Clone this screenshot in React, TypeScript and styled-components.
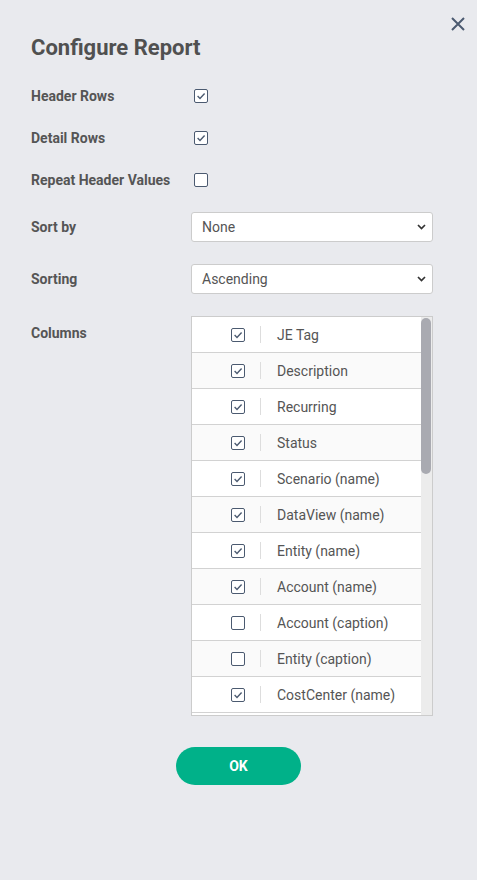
import React from "react";
import styled, { createGlobalStyle } from "styled-components";

const GlobalStyle = createGlobalStyle`
	html, body {
		margin: 0;
		padding: 0;
		background: #e9eaee;
		font-family: Roboto, "Liberation Sans", sans-serif;
		color: #555;
	}
`;

// only the rows that fit in the list are drawn; the thumb shows the rest
const columns: { name: string; checked: boolean }[] = [
	{ name: "JE Tag", checked: true },
	{ name: "Description", checked: true },
	{ name: "Recurring", checked: true },
	{ name: "Status", checked: true },
	{ name: "Scenario (name)", checked: true },
	{ name: "DataView (name)", checked: true },
	{ name: "Entity (name)", checked: true },
	{ name: "Account (name)", checked: true },
	{ name: "Account (caption)", checked: false },
	{ name: "Entity (caption)", checked: false },
	{ name: "CostCenter (name)", checked: true },
];

const Check = ({ checked }: { checked: boolean }) => (
	<CheckBox>
		{checked && (
			<svg width="10" height="10" viewBox="0 0 10 10">
				<path
					d="M1.6 5.1 L4 7.4 L8.6 2.6"
					fill="none"
					stroke="#4b5a70"
					strokeWidth="1.4"
				/>
			</svg>
		)}
	</CheckBox>
);

const Chevron = () => (
	<ChevronIcon width="9" height="6" viewBox="0 0 9 6">
		<path d="M1 1 L4.5 4.5 L8 1" fill="none" stroke="#333" strokeWidth="1.7" />
	</ChevronIcon>
);

export default function App() {
	return (
		<>
			<GlobalStyle />
			<Dialog>
				<CloseButton aria-label="Close">
					<svg width="14" height="14" viewBox="0 0 14 14">
						<path
							d="M1 1 L13 13 M13 1 L1 13"
							stroke="#4b5a70"
							strokeWidth="2"
						/>
					</svg>
				</CloseButton>
				<Title>Configure Report</Title>
				<Form>
					<CheckRow>
						<Label>Header Rows</Label>
						<Control>
							<Check checked />
						</Control>
					</CheckRow>
					<CheckRow>
						<Label>Detail Rows</Label>
						<Control>
							<Check checked />
						</Control>
					</CheckRow>
					<CheckRow>
						<Label>Repeat Header Values</Label>
						<Control>
							<Check checked={false} />
						</Control>
					</CheckRow>
					<SelectRow>
						<Label>Sort by</Label>
						<Select>
							<span>None</span>
							<Chevron />
						</Select>
					</SelectRow>
					<SelectRow>
						<Label>Sorting</Label>
						<Select>
							<span>Ascending</span>
							<Chevron />
						</Select>
					</SelectRow>
					<ListRow>
						<ListLabel>Columns</ListLabel>
						<ListBox>
							<Rows>
								{columns.map((c, i) => (
									<ColumnItem key={c.name} $odd={i % 2 === 1}>
										<ItemCheck>
											<Check checked={c.checked} />
										</ItemCheck>
										<Divider />
										<ItemName>{c.name}</ItemName>
									</ColumnItem>
								))}
							</Rows>
							<ScrollTrack>
								<ScrollThumb />
							</ScrollTrack>
						</ListBox>
					</ListRow>
				</Form>
				<Footer>
					<OkButton>OK</OkButton>
				</Footer>
			</Dialog>
		</>
	);
}

const Dialog = styled.div`
	position: relative;
	width: 477px;
	min-height: 880px;
	box-sizing: border-box;
	padding: 35px 44px 0 31px;
`;

const CloseButton = styled.button`
	position: absolute;
	top: 16px;
	right: 11px;
	width: 16px;
	height: 16px;
	padding: 0;
	border: none;
	background: none;
	display: flex;
	align-items: center;
	justify-content: center;
`;

const Title = styled.h2`
	margin: 0;
	font-size: 22px;
	line-height: 26px;
	font-weight: 700;
	color: #505050;
`;

const Form = styled.div`
	margin-top: 25px;
	display: flex;
	flex-direction: column;
`;

const Label = styled.div`
	width: 160px;
	flex-shrink: 0;
	font-size: 14px;
	font-weight: 700;
	color: #555;
`;

const CheckRow = styled.div`
	display: flex;
	align-items: center;
	height: 20px;
	margin-bottom: 22px;
`;

const Control = styled.div`
	padding-left: 3px;
	display: flex;
	align-items: center;
`;

const CheckBox = styled.span`
	width: 14px;
	height: 14px;
	box-sizing: border-box;
	border: 1.5px solid #4b5a70;
	border-radius: 2px;
	background: #fff;
	display: inline-flex;
	align-items: center;
	justify-content: center;
`;

const SelectRow = styled.div`
	display: flex;
	align-items: center;
	margin-bottom: 22px;
`;

const Select = styled.div`
	width: 242px;
	height: 30px;
	box-sizing: border-box;
	border: 1px solid #ccc;
	border-radius: 3px;
	background: #fff;
	display: flex;
	align-items: center;
	justify-content: space-between;
	padding: 0 6px 0 10px;
	font-size: 14px;
	color: #555;
`;

const ChevronIcon = styled.svg`
	display: block;
`;

const ListRow = styled.div`
	display: flex;
	align-items: flex-start;
`;

const ListLabel = styled(Label)`
	padding-top: 9px;
`;

const ListBox = styled.div`
	width: 242px;
	height: 400px;
	box-sizing: border-box;
	border: 1px solid #ccc;
	background: #fff;
	display: flex;
	overflow: hidden;
`;

const Rows = styled.div`
	flex: 1;
	display: flex;
	flex-direction: column;
`;

const ScrollTrack = styled.div`
	width: 11px;
	flex-shrink: 0;
	background: #ececec;
	padding-top: 1px;
	box-sizing: border-box;
`;

const ScrollThumb = styled.div`
	width: 10px;
	height: 156px;
	border-radius: 5px;
	background: #a9aab1;
`;

const ColumnItem = styled.div<{ $odd: boolean }>`
	display: flex;
	align-items: center;
	height: 36px;
	flex-shrink: 0;
	box-sizing: border-box;
	border-bottom: 1px solid #d2d2d2;
	background: ${(p) => (p.$odd ? "#fafafa" : "#fff")};
`;

const ItemCheck = styled.div`
	padding-left: 39px;
	padding-right: 15px;
	display: flex;
	align-items: center;
`;

const Divider = styled.div`
	width: 1px;
	height: 17px;
	background: #ddd;
`;

const ItemName = styled.div`
	padding-left: 16px;
	font-size: 14px;
	color: #555;
	white-space: nowrap;
`;

const Footer = styled.div`
	display: flex;
	justify-content: center;
	margin-top: 31px;
	margin-right: -13px;
`;

const OkButton = styled.button`
	width: 125px;
	height: 38px;
	border: none;
	border-radius: 19px;
	background: #00b189;
	color: #fff;
	font-family: Roboto, "Liberation Sans", sans-serif;
	font-size: 14px;
	font-weight: 700;
`;
